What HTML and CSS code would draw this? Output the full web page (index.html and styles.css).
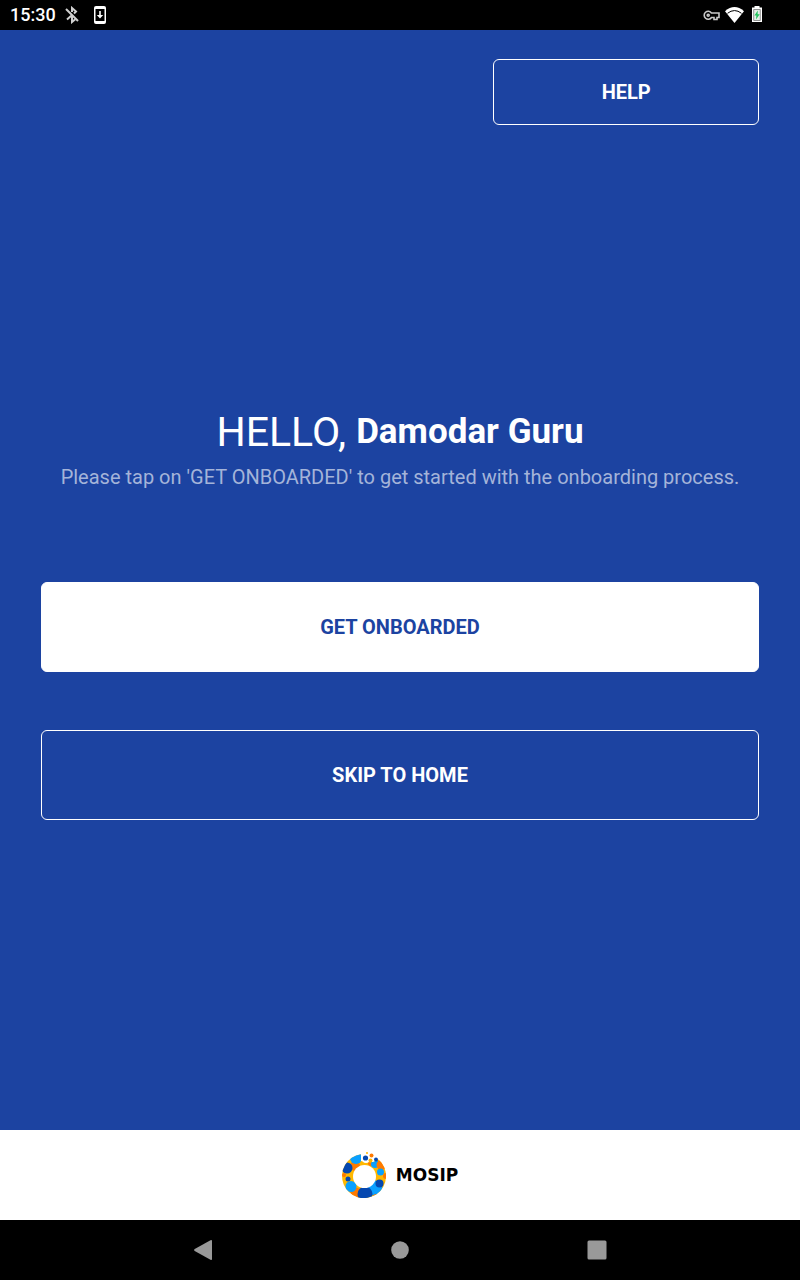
FILE: index.html
```html
<!DOCTYPE html>
<html lang="en">
<head>
<meta charset="utf-8">
<meta name="viewport" content="width=device-width, initial-scale=1">
<title>Welcome</title>
<link rel="stylesheet" href="styles.css">
</head>
<body>
<div class="status-bar">
  <div class="status-left">
    <time class="clock">15:30</time>
    <svg class="icon-bluetooth" width="16" height="18" viewBox="0 0 16 18" fill="none" stroke="#d0d0d0" stroke-width="2" aria-hidden="true"><path d="M2 3l12 12M3 13.500L7.500 9.500M8 6V2L12 5.500 10 7.500M8 9.500V16L11 13.500"/></svg>
    <svg class="icon-update" width="12" height="18" viewBox="0 0 12 18" aria-hidden="true"><rect width="12" height="18" rx="2" fill="#fff"/><path fill="#000" d="M1.500 3h9v12h-9z"/><path fill="#fff" d="M5.200 5h1.600v4h2.400L6 12.500 2.800 9h2.400z"/></svg>
  </div>
  <div class="status-right">
    <svg class="icon-key" width="17" height="12" viewBox="0 0 17 12" fill="none" stroke="#c9c9c9" stroke-width="1.600" aria-hidden="true"><path d="M8.500 4A4 4 0 1 0 8.500 8.500h2.500v2h3V8.500H16V4z"/><circle cx="5.200" cy="6.300" r="1"/></svg>
    <svg class="icon-wifi" width="19" height="16" viewBox="0 0 19 16" aria-hidden="true"><path fill="#fff" d="M0 4.200Q9.500-4 19 4.200L9.500 16z"/><path fill="none" stroke="#000" stroke-width="1" d="M2.500 6.300Q9.500 .8 16.500 6.300"/></svg>
    <svg class="icon-battery" width="10" height="16" viewBox="0 0 10 16" aria-hidden="true"><path fill="#fff" d="M2.500 0h5v1.500H10V16H0V1.500h2.500z"/><path fill="#e3efe6" stroke="#777" stroke-width=".8" d="M1.700 3.500h6.600v11H1.700z"/><path fill="#22c55e" d="M5.800 4.500L2.400 9.600h2L4 13.500l3.700-5.200H5.600z"/></svg>
  </div>
</div>
<main class="screen">
  <div class="top-row"><button class="button button-outline button-help" type="button">HELP</button></div>
  <section class="welcome">
    <h1 class="greeting"><span class="hello">HELLO,</span><span class="name">Damodar Guru</span></h1>
    <p class="hint">Please tap on 'GET ONBOARDED' to get started with the onboarding process.</p>
    <div class="actions">
      <button class="button button-solid" type="button">GET ONBOARDED</button>
      <button class="button button-outline" type="button">SKIP TO HOME</button>
    </div>
  </section>
</main>
<footer class="brand">
  <svg width="46" height="48" viewBox="0 0 46 48" aria-hidden="true">
    <defs>
      <clipPath id="outer"><path d="M19 3.300A22 22 0 1 0 36.500 8.500Q31 12 26 11L19 10z"/></clipPath>
      <mask id="hole"><rect width="46" height="48" fill="#fff"/><circle cx="22.500" cy="25.500" r="11.500" fill="#000"/><circle cx="24" cy="7.500" r="4.500" fill="#000"/></mask>
    </defs>
    <g mask="url(#hole)"><g clip-path="url(#outer)">
      <rect width="46" height="48" fill="#ffb800"/>
      <circle cx="13" cy="15" r="5" fill="#ff7a00"/><circle cx="14" cy="7" r="6" fill="#0aa0ff"/>
      <circle cx="5" cy="17" r="5.500" fill="#0548b0"/>
      <circle cx="29" cy="12" r="3" fill="#ff7a00"/><circle cx="33" cy="13" r="4" fill="#0aa0ff"/>
      <circle cx="39.500" cy="14" r="5" fill="#ff7a00"/><circle cx="38.500" cy="21" r="3.500" fill="#0aa0ff"/>
      <circle cx="2" cy="24" r="2" fill="#ff7a00"/><circle cx="6" cy="28" r="2.500" fill="#0548b0"/>
      <circle cx="14" cy="42" r="5.500" fill="#ff7a00"/><circle cx="9" cy="35.500" r="5.500" fill="#0aa0ff"/>
      <circle cx="44" cy="25" r="3" fill="#ff7a00"/><circle cx="33" cy="37" r="7.500" fill="#0aa0ff"/>
      <circle cx="37.500" cy="32.500" r="4" fill="#0548b0"/><circle cx="34" cy="46" r="3" fill="#ff7a00"/>
      <circle cx="23" cy="43" r="7.500" fill="#0548b0"/>
    </g></g>
    <circle cx="23.500" cy="7" r="2.600" fill="#0548b0"/><circle cx="29.500" cy="4.500" r="2" fill="#ff7a00"/><circle cx="34" cy="8.500" r="2" fill="#0548b0"/><circle cx="28.500" cy="9.500" r="2" fill="#ffb800"/><circle cx="25" cy="2" r="1" fill="#ffb800"/>
  </svg>
  <span class="wordmark">MOSIP</span>
</footer>
<nav class="system-nav" aria-label="System navigation">
  <button class="nav-button" type="button" aria-label="Back"><svg width="20" height="22" viewBox="0 0 20 22"><path fill="#999" d="M1.700 10L17.500 1.200Q19 .6 19 2V20q0 1.400-1.500.7L1.700 12q-1.500-1 0-2z"/></svg></button>
  <button class="nav-button" type="button" aria-label="Home"><svg width="20" height="20" viewBox="0 0 20 20"><circle cx="10" cy="10" r="8.800" fill="#999"/></svg></button>
  <button class="nav-button" type="button" aria-label="Recent apps"><svg width="20" height="20" viewBox="0 0 20 20"><rect x=".5" y=".5" width="19" height="19" rx="1.500" fill="#999"/></svg></button>
</nav>
</body>
</html>
```
FILE: styles.css
```css
* { box-sizing: border-box; }
body {
  margin: 0;
  min-height: 100vh;
  display: flex;
  flex-direction: column;
  background: #1c43a1;
  color: #fff;
  font-family: Roboto, "Liberation Sans", sans-serif;
}
svg { display: block; flex: none; }
.status-bar {
  display: flex;
  justify-content: space-between;
  align-items: center;
  height: 30px;
  padding: 0 38px 0 10px;
  background: #000;
}
.status-left { display: flex; align-items: center; }
.status-right { display: flex; align-items: center; }
.icon-wifi { margin: 0 8px 0 5px; }
.icon-battery { margin-bottom: 2px; }
.clock { font-size: 18px; line-height: 30px; font-weight: 500; }
.icon-bluetooth { margin-left: 8px; }
.icon-update { margin-left: 14px; }
.screen { flex: 1; display: flex; flex-direction: column; padding: 29px 41px; }
.top-row { display: flex; justify-content: flex-end; }
.button {
  width: 100%;
  height: 90px;
  border: 1px solid #fff;
  border-radius: 6px;
  font: 700 20px/24px Roboto, "Liberation Sans", sans-serif;
  text-align: center;
}
.button-outline { background: transparent; color: #fff; }
.button-solid { background: #fff; color: #1c43a1; }
.button-help { width: 37%; height: 66px; }
.welcome { flex: 1; display: flex; flex-direction: column; justify-content: center; }
.greeting {
  display: flex;
  justify-content: center;
  align-items: center;
  gap: 10px;
  margin: 0;
  line-height: 50px;
}
.hello { font-size: 41px; font-weight: 400; }
.name { font-size: 35px; font-weight: 700; }
.hint {
  margin: 8px 0 93px;
  color: #a4b4d9;
  font-size: 20px;
  line-height: 24px;
  text-align: center;
}
.actions { display: flex; flex-direction: column; gap: 58px; }
.brand {
  display: flex;
  justify-content: center;
  align-items: center;
  gap: 8px;
  height: 90px;
  background: #fff;
}
.wordmark {
  color: #000;
  font-family: "DejaVu Sans", sans-serif;
  font-size: 17px;
  font-weight: 700;
  line-height: 24px;
}
.system-nav {
  display: flex;
  justify-content: space-between;
  align-items: center;
  height: 60px;
  padding: 0 193px;
  background: #000;
}
.nav-button { padding: 0; border: 0; background: none; }
```
